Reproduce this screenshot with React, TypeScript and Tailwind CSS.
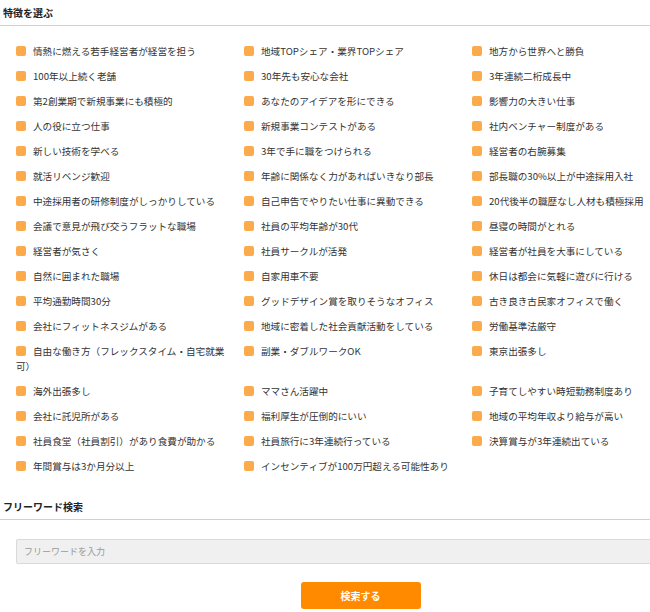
import React, { useState } from "react";

const features: string[] = [
  "情熱に燃える若手経営者が経営を担う",
  "地域TOPシェア・業界TOPシェア",
  "地方から世界へと勝負",
  "100年以上続く老舗",
  "30年先も安心な会社",
  "3年連続二桁成長中",
  "第2創業期で新規事業にも積極的",
  "あなたのアイデアを形にできる",
  "影響力の大きい仕事",
  "人の役に立つ仕事",
  "新規事業コンテストがある",
  "社内ベンチャー制度がある",
  "新しい技術を学べる",
  "3年で手に職をつけられる",
  "経営者の右腕募集",
  "就活リベンジ歓迎",
  "年齢に関係なく力があればいきなり部長",
  "部長職の30%以上が中途採用入社",
  "中途採用者の研修制度がしっかりしている",
  "自己申告でやりたい仕事に異動できる",
  "20代後半の職歴なし人材も積極採用",
  "会議で意見が飛び交うフラットな職場",
  "社員の平均年齢が30代",
  "昼寝の時間がとれる",
  "経営者が気さく",
  "社員サークルが活発",
  "経営者が社員を大事にしている",
  "自然に囲まれた職場",
  "自家用車不要",
  "休日は都会に気軽に遊びに行ける",
  "平均通勤時間30分",
  "グッドデザイン賞を取りそうなオフィス",
  "古き良き古民家オフィスで働く",
  "会社にフィットネスジムがある",
  "地域に密着した社会貢献活動をしている",
  "労働基準法厳守",
  "自由な働き方（フレックスタイム・自宅就業可）",
  "副業・ダブルワークOK",
  "東京出張多し",
  "海外出張多し",
  "ママさん活躍中",
  "子育てしやすい時短勤務制度あり",
  "会社に託児所がある",
  "福利厚生が圧倒的にいい",
  "地域の平均年収より給与が高い",
  "社員食堂（社員割引）があり食費が助かる",
  "社員旅行に3年連続行っている",
  "決算賞与が3年連続出ている",
  "年間賞与は3か月分以上",
  "インセンティブが100万円超える可能性あり",
];

function SectionTitle({ text }: { text: string }) {
  return (
    <div className="h-[26px] flex items-center pl-[3px] border-b border-[#e6cf9c] text-[10px] font-bold text-[#222]">
      {text}
    </div>
  );
}

export default function App() {
  const [checked, setChecked] = useState<Record<number, boolean>>({});
  const [keyword, setKeyword] = useState("");

  return (
    <div
      className="w-[650px] h-[612px] overflow-hidden bg-white text-[#333]"
      style={{ fontFamily: '"Noto Sans CJK JP", "Noto Sans", sans-serif' }}
    >
      <div className="w-[721px]">
        <SectionTitle text="特徴を選ぶ" />

        <div className="grid grid-cols-[228px_228px_228px] mt-[13px]">
          {features.map((label, i) => (
            <label
              key={i}
              className="pl-4 py-[5px] text-[9.6px] leading-[15px] cursor-pointer"
              onClick={() => setChecked({ ...checked, [i]: !checked[i] })}
            >
              <span
                className={
                  "inline-block w-[10px] h-[10px] rounded-[2px] mr-[7px] align-[-1px] " +
                  (checked[i] ? "bg-[#f08300]" : "bg-[#fbab4c]")
                }
              />
              {label}
            </label>
          ))}
        </div>

        <div className="mt-[15px]">
          <SectionTitle text="フリーワード検索" />
        </div>

        <div className="pl-4 mt-[16px]">
          <input
            type="text"
            value={keyword}
            onChange={(e) => setKeyword(e.target.value)}
            placeholder="フリーワードを入力"
            className="w-full h-[25px] px-[7px] bg-[#f0f0f0] border border-[#d9d9d9] rounded-[2px] text-[9px] text-[#333] placeholder:text-[#999] focus:outline-none"
          />
        </div>

        <div className="flex justify-center mt-[18px]">
          <button className="w-[120px] h-[27px] rounded-[3px] bg-[#ff8a00] text-white text-[10px] font-bold">
            検索する
          </button>
        </div>
      </div>
    </div>
  );
}
